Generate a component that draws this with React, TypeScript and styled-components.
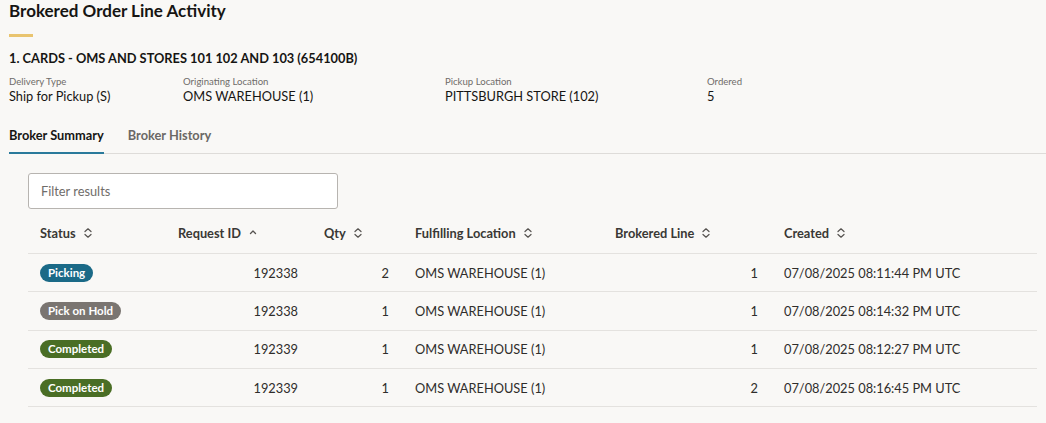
import React from 'react';
import styled, { createGlobalStyle } from 'styled-components';

const GlobalStyle = createGlobalStyle`
  html, body {
    margin: 0;
    padding: 0;
    background: #f9f8f6;
  }
  body {
    font-family: Lato, "Noto Sans", "Liberation Sans", sans-serif;
    color: #161513;
  }
`;

type Status = 'picking' | 'hold' | 'completed';

const rows: {
  status: Status;
  label: string;
  requestId: string;
  qty: number;
  location: string;
  line: number;
  created: string;
}[] = [
  { status: 'picking', label: 'Picking', requestId: '192338', qty: 2, location: 'OMS WAREHOUSE (1)', line: 1, created: '07/08/2025 08:11:44 PM UTC' },
  { status: 'hold', label: 'Pick on Hold', requestId: '192338', qty: 1, location: 'OMS WAREHOUSE (1)', line: 1, created: '07/08/2025 08:14:32 PM UTC' },
  { status: 'completed', label: 'Completed', requestId: '192339', qty: 1, location: 'OMS WAREHOUSE (1)', line: 1, created: '07/08/2025 08:12:27 PM UTC' },
  { status: 'completed', label: 'Completed', requestId: '192339', qty: 1, location: 'OMS WAREHOUSE (1)', line: 2, created: '07/08/2025 08:16:45 PM UTC' },
];

const SortBoth = () => (
  <SortIcon width="8" height="10" viewBox="0 0 8 10">
    <path d="M1 3.5 L4 0.8 L7 3.5 M1 6.5 L4 9.2 L7 6.5" fill="none" stroke="currentColor" strokeWidth="1.2" strokeLinecap="round" strokeLinejoin="round" />
  </SortIcon>
);

const SortUp = () => (
  <SortIcon width="8" height="10" viewBox="0 0 8 10">
    <path d="M1.5 5.5 L4 3 L6.5 5.5" fill="none" stroke="currentColor" strokeWidth="1.3" strokeLinecap="round" strokeLinejoin="round" />
  </SortIcon>
);

const App = () => {
  return (
    <>
      <GlobalStyle />
      <Page>
        <Title>Brokered Order Line Activity</Title>
        <Accent />
        <ItemTitle>1. CARDS - OMS AND STORES 101 102 AND 103 (654100B)</ItemTitle>
        <Details>
          <Detail>
            <DetailLabel>Delivery Type</DetailLabel>
            <DetailValue>Ship for Pickup (S)</DetailValue>
          </Detail>
          <Detail>
            <DetailLabel>Originating Location</DetailLabel>
            <DetailValue>OMS WAREHOUSE (1)</DetailValue>
          </Detail>
          <Detail>
            <DetailLabel>Pickup Location</DetailLabel>
            <DetailValue>PITTSBURGH STORE (102)</DetailValue>
          </Detail>
          <Detail>
            <DetailLabel>Ordered</DetailLabel>
            <DetailValue>5</DetailValue>
          </Detail>
        </Details>
        <Tabs>
          <Tab $active>Broker Summary</Tab>
          <Tab>Broker History</Tab>
        </Tabs>
        <Section>
          <FilterInput placeholder="Filter results" />
          <Table>
            <HeaderRow>
              <HeadCell>Status <SortBoth /></HeadCell>
              <HeadCell>Request ID <SortUp /></HeadCell>
              <HeadCell>Qty <SortBoth /></HeadCell>
              <HeadCell>Fulfilling Location <SortBoth /></HeadCell>
              <HeadCell>Brokered Line <SortBoth /></HeadCell>
              <HeadCell>Created <SortBoth /></HeadCell>
            </HeaderRow>
            {rows.map((r, i) => (
              <Row key={i}>
                <Cell>
                  <Badge $status={r.status}>{r.label}</Badge>
                </Cell>
                <Cell $right>{r.requestId}</Cell>
                <Cell $right>{r.qty}</Cell>
                <Cell>{r.location}</Cell>
                <Cell $right>{r.line}</Cell>
                <Cell>{r.created}</Cell>
              </Row>
            ))}
          </Table>
        </Section>
      </Page>
    </>
  );
};

export default App;

const Page = styled.div`
  padding: 0 9px 0 9px;
`;

const Title = styled.h1`
  margin: 0;
  font-size: 17px;
  line-height: 21px;
  font-weight: 700;
  color: #161513;
`;

const Accent = styled.div`
  width: 24px;
  height: 3px;
  margin-top: 13px;
  background: #e9c46f;
`;

const ItemTitle = styled.h2`
  margin: 13px 0 0;
  font-size: 12.8px;
  line-height: 16px;
  font-weight: 700;
  color: #161513;
`;

const Details = styled.div`
  display: grid;
  grid-template-columns: 174px 262px 262px 1fr;
  margin-top: 10px;
`;

const Detail = styled.div`
  display: flex;
  flex-direction: column;
`;

const DetailLabel = styled.span`
  font-size: 9.6px;
  line-height: 12px;
  color: #6f6c69;
`;

const DetailValue = styled.span`
  font-size: 12.8px;
  line-height: 16px;
  color: #161513;
`;

const Tabs = styled.div`
  display: flex;
  gap: 24px;
  margin: 13px -9px 0 0;
  box-shadow: inset 0 -1px 0 #dedcd9;
`;

const Tab = styled.div<{ $active?: boolean }>`
  padding: 10px 0 9px;
  font-size: 12.8px;
  line-height: 16px;
  font-weight: 700;
  color: ${(p) => (p.$active ? '#161513' : '#6b6865')};
  border-bottom: 2px solid ${(p) => (p.$active ? '#2a7a9b' : 'transparent')};
`;

const Section = styled.div`
  margin-left: 19px;
  padding-top: 19px;
`;

const FilterInput = styled.input`
  box-sizing: border-box;
  width: 310px;
  height: 36px;
  padding: 0 12px;
  border: 1px solid #b7b4b0;
  border-radius: 3px;
  background: #ffffff;
  font-family: inherit;
  font-size: 12.8px;
  color: #161513;
  outline: none;
  &::placeholder {
    color: #6f6c69;
  }
`;

const columns = '138px 146px 91px 200px 169px 1fr';

const Table = styled.div`
  margin-top: 4px;
`;

const HeaderRow = styled.div`
  display: grid;
  grid-template-columns: ${columns};
  height: 40px;
  align-items: center;
  border-bottom: 1px solid #e4e2df;
`;

const HeadCell = styled.div`
  display: flex;
  align-items: center;
  gap: 8px;
  padding: 0 12px;
  font-size: 12.8px;
  font-weight: 700;
  color: #3a3835;
`;

const SortIcon = styled.svg`
  color: #55524f;
  flex-shrink: 0;
`;

const Row = styled.div`
  display: grid;
  grid-template-columns: ${columns};
  height: 37.3px;
  align-items: center;
  border-bottom: 1px solid #e4e2df;
`;

const Cell = styled.div<{ $right?: boolean }>`
  padding: ${(p) => (p.$right ? '0 14px 0 12px' : '0 12px')};
  font-size: 12.8px;
  color: #2f2d2b;
  text-align: ${(p) => (p.$right ? 'right' : 'left')};
`;

const badgeColors: Record<Status, string> = {
  picking: '#1b6a87',
  hold: '#7a7571',
  completed: '#4a6e25',
};

const Badge = styled.span<{ $status: Status }>`
  display: inline-block;
  height: 18px;
  line-height: 18px;
  padding: 0 8px;
  border-radius: 9px;
  background: ${(p) => badgeColors[p.$status]};
  color: #ffffff;
  font-size: 11.5px;
  font-weight: 700;
`;
